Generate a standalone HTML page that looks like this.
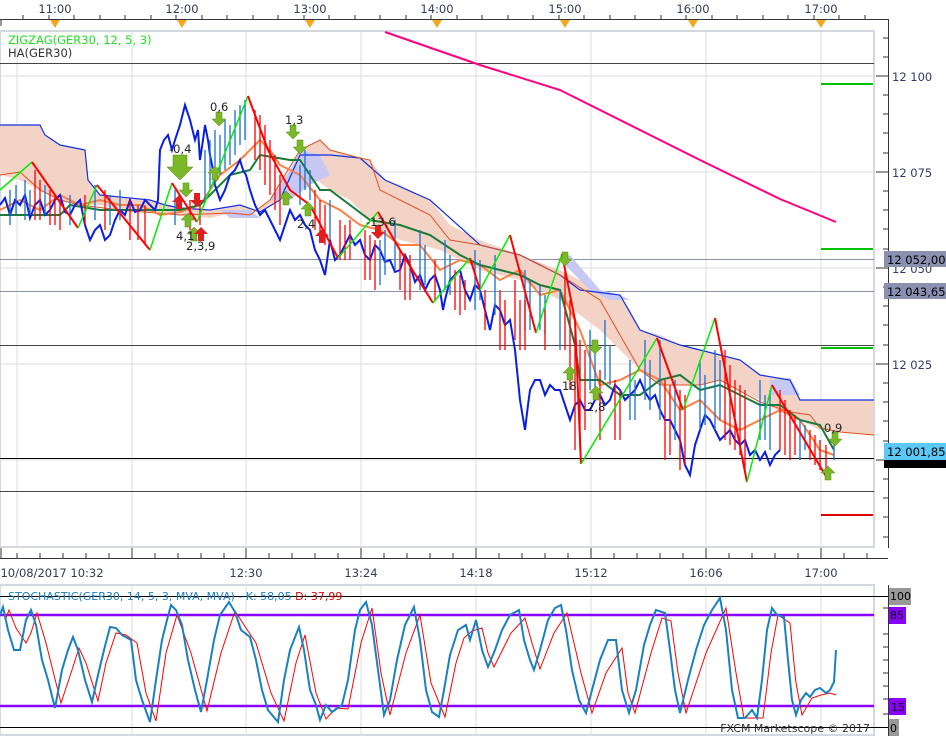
<!DOCTYPE html>
<html><head><meta charset="utf-8"><style>
html,body{margin:0;padding:0;background:#fff;}
svg{display:block;font-family:"DejaVu Sans",Verdana,sans-serif;}
</style></head><body>
<svg width="946" height="736" viewBox="0 0 946 736" xmlns="http://www.w3.org/2000/svg">
<rect width="946" height="736" fill="#fff"/>
<g font-size="11.5" fill="#333a55" text-anchor="middle">
<text x="55" y="13">11:00</text><text x="182" y="13">12:00</text><text x="310" y="13">13:00</text>
<text x="437" y="13">14:00</text><text x="565" y="13">15:00</text><text x="693" y="13">16:00</text><text x="821" y="13">17:00</text>
</g>
<line x1="0" y1="19.5" x2="888" y2="19.5" stroke="#333" stroke-width="1"/>
<g stroke="#333" stroke-width="1">
<path d="M1 19v7M23 19v-4M49 19v-4M74 19v-4M100 19v-4M125 19v-4M151 19v-4M176 19v-4M202 19v-4M227 19v-4M253 19v-4M278 19v-4M304 19v-4M329 19v-4M355 19v-4M380 19v-4M406 19v-4M431 19v-4M457 19v-4M482 19v-4M508 19v-4M533 19v-4M559 19v-4M584 19v-4M610 19v-4M635 19v-4M661 19v-4M686 19v-4M712 19v-4M737 19v-4M763 19v-4M788 19v-4M814 19v-4M839 19v-4M865 19v-4"/>
</g>
<g fill="#f5a623">
<path d="M50 20h10l-5 8z"/><path d="M177 20h10l-5 8z"/><path d="M305 20h10l-5 8z"/><path d="M432 20h10l-5 8z"/><path d="M560 20h10l-5 8z"/><path d="M688 20h10l-5 8z"/><path d="M816 20h10l-5 8z"/>
</g>
<rect x="0" y="31" width="874" height="516" fill="none" stroke="#d4d8e0" stroke-width="2"/>
<line x1="888.5" y1="19" x2="888.5" y2="548" stroke="#333"/>
<g stroke="#ddd" stroke-width="1">
<path d="M17 32v515M132 32v515M246 32v515M361 32v515M476 32v515M591 32v515M706 32v515M821 32v515"/>
<path d="M0 76h874M0 172h874M0 268h874M0 364h874M0 460h874"/>
</g>
<g stroke="#333"><path d="M876 76h12M876 172h12M876 268h12M876 364h12M876 460h12M883 38h5M883 57h5M883 95h5M883 114h5M883 133h5M883 153h5M883 191h5M883 210h5M883 229h5M883 249h5M883 287h5M883 306h5M883 325h5M883 345h5M883 383h5M883 402h5M883 421h5M883 441h5M883 479h5M883 498h5M883 517h5M883 537h5"/></g>
<g font-size="11.5" fill="#333a66"><text x="892" y="81">12 100</text><text x="892" y="177">12 075</text><text x="892" y="273">12 050</text><text x="892" y="369">12 025</text></g>
<line x1="0" y1="63.5" x2="874" y2="63.5" stroke="#444"/>
<line x1="0" y1="259.5" x2="874" y2="259.5" stroke="#8a90b0"/>
<line x1="0" y1="291.5" x2="874" y2="291.5" stroke="#8a90b0"/>
<line x1="0" y1="345.5" x2="874" y2="345.5" stroke="#444"/>
<line x1="0" y1="458.5" x2="874" y2="458.5" stroke="#000"/>
<line x1="0" y1="491.5" x2="874" y2="491.5" stroke="#444"/>
<path d="M821 415h52" stroke="#9a80d8" stroke-width="2"/>
<g stroke="#00c000" stroke-width="2"><path d="M821 84h52M821 249h52M821 348h52"/></g>
<path d="M821 515h52" stroke="#e00000" stroke-width="2"/>
<path d="M0 125 L40 125 L45 135 L60 145 L85 150 L88 180 L100 195 L150 200 L165 205 L180 208 L210 210 L240 205 L260 212 L280 200 L300 150 L320 140 L330 150 L360 158 L370 160 L385 180 L400 185 L430 200 L450 225 L480 240 L520 255 L560 270 L580 280 L600 290 L620 295 L630 310 L640 330 L660 335 L680 345 L700 350 L720 355 L740 360 L760 375 L790 380 L800 400 L874 400 L874 435 L840 432 L820 430 L800 420 L780 412 L760 400 L720 380 L700 385 L660 385 L640 370 L600 330 L560 300 L520 280 L480 270 L440 250 L400 240 L380 230 L350 200 L330 190 L310 175 L290 175 L270 200 L250 215 L230 213 L210 218 L180 215 L150 212 L120 210 L100 205 L80 205 L60 200 L40 190 L20 180 L0 175Z" fill="#f3d3c6"/>
<path d="M270 200 L290 170 L300 150 L320 155 L330 175 L310 185 L290 200Z M560 260 L570 255 L600 290 L620 295 L630 300 L610 300 L590 290Z M770 380 L790 378 L800 395 L770 395Z M220 210 L250 210 L260 218 L230 218Z" fill="#c8c8f5"/>
<polyline fill="none" stroke="#1030e0" stroke-width="1.2" points="0,125 40,125 45,135 60,145 85,150 88,180 100,195 150,200 165,205 180,208 210,210 240,205 260,212 280,200 300,155 330,155 360,158 385,180 430,200 480,245 520,255 560,275 580,290 620,295 640,330 680,345 720,355 740,360 760,375 790,380 800,400 874,400"/>
<polyline fill="none" stroke="#e05020" stroke-width="1" points="0,175 20,172 40,190 60,200 80,205 120,210 180,215 230,213 250,215 270,200 300,150 320,140 330,150 360,158 370,160 380,190 400,200 430,215 450,240 480,245 520,255 560,275 600,300 640,370 660,385 700,385 720,380 760,402 790,412 810,415 820,428 840,432 874,435"/>
<polyline fill="none" stroke="#ff7f40" stroke-width="2" points="0,210 20,200 40,210 60,195 80,205 100,200 120,205 140,205 160,215 180,212 200,205 220,175 240,160 260,140 270,150 280,165 300,175 320,200 340,210 360,225 380,230 400,245 420,245 440,270 460,260 480,265 500,280 520,270 540,295 560,290 580,330 600,385 620,380 640,370 660,380 680,410 700,400 720,420 740,430 760,420 780,410 800,420 820,450 834,455"/>
<polyline fill="none" stroke="#1a7a3a" stroke-width="2" points="0,215 60,215 70,205 100,210 130,210 150,210 180,210 200,205 230,175 250,170 260,155 290,160 300,160 320,190 330,190 350,205 370,220 400,225 430,235 460,255 480,265 500,270 520,275 540,285 560,290 575,345 580,380 600,380 620,395 640,395 660,380 680,375 700,390 720,385 740,395 760,405 780,405 800,420 820,425 834,450"/>
<polyline fill="none" stroke="#0a1ee0" stroke-width="2" points="0,205 5,198 10,215 15,200 20,205 25,195 30,218 35,205 40,200 45,215 50,210 55,200 60,195 65,212 70,215 75,205 80,200 85,225 90,240 95,230 100,225 105,240 110,235 115,220 120,210 125,215 130,200 135,212 140,210 145,200 150,205 155,210 158,200 160,150 164,140 168,135 172,150 175,140 180,125 185,105 190,120 195,140 198,130 200,160 203,140 205,125 208,140 210,155 213,170 215,185 220,200 225,190 230,175 235,170 240,160 243,170 246,175 250,190 255,205 260,215 265,210 270,220 275,230 280,240 285,225 290,210 295,220 300,215 305,225 310,230 315,250 320,260 325,275 330,240 335,260 340,255 345,245 350,235 355,245 360,240 365,255 370,260 375,245 380,250 385,262 390,260 395,272 400,270 405,255 410,265 415,282 420,275 425,290 430,280 435,275 440,290 443,310 445,300 450,280 455,275 460,270 465,290 470,300 475,285 480,290 485,310 490,330 495,305 500,310 505,325 510,320 515,350 520,400 525,430 528,405 530,390 535,380 540,380 545,395 550,385 555,390 560,390 565,405 570,420 575,405 580,400 585,410 590,410 595,400 600,395 605,405 610,400 615,385 620,390 625,400 630,395 635,390 640,380 645,392 650,400 655,395 660,410 665,420 670,420 675,430 680,440 685,465 690,475 695,445 700,430 705,415 710,420 715,430 720,440 725,435 730,430 735,440 740,445 745,440 750,455 755,450 760,460 765,452 770,465 775,455 780,450"/>
<g stroke="#1a6fd0" stroke-width="1.3">
<path d="M10 190v35M16 185v30M25 180v40M30 190v25M45 185v30M70 195v30M95 185v35M110 195v30M120 190v30M175 190v35M205 150v50M210 140v50M215 130v55M220 135v40M225 120v50M230 125v40M235 110v45M240 105v40M245 100v40M300 165v40M305 150v40M310 170v30M330 200v40M380 240v45M385 230v45M395 220v50M420 230v60M425 245v40M445 240v50M450 255v40M475 250v60M480 260v40M495 255v60M525 270v60M530 280v50M540 285v45M545 295v40M560 290v60M590 330v60M595 340v50M605 320v60M610 345v40M630 360v60M635 380v40M645 340v60M650 360v50M660 340v80M675 380v60M700 360v70M705 375v50M715 350v80M720 360v60M760 380v60M765 395v45M770 390v60M800 420v40M805 425v25M834 430v30"/>
</g>
<g stroke="#ff0000" stroke-width="1.3">
<path d="M35 170v50M40 180v40M50 190v35M55 195v30M60 200v30M85 195v30M105 190v40M130 200v40M138 205v35M145 205v40M190 200v30M200 205v20M255 110v50M260 115v55M265 125v60M270 140v55M275 155v55M280 175v50M315 190v40M320 200v35M325 205v40M340 220v40M345 225v35M350 220v40M365 230v50M370 235v45M375 240v50M400 250v40M405 255v45M410 255v45M435 260v40M455 270v40M460 275v40M465 280v30M485 290v40M500 290v60M505 300v50M515 280v60M520 300v50M525 300v50M545 310v40M565 270v80M570 300v90M575 330v120M580 340v110M585 350v80M600 370v70M615 380v60M620 390v50M665 380v80M670 385v70M680 390v80M685 395v70M725 350v90M730 365v80M735 380v70M740 385v70M745 390v80M780 390v60M785 400v55M790 410v50M795 415v40M810 430v30M815 435v30M820 440v30M826 445v30"/>
</g>
<polyline fill="none" stroke="#00ee00" stroke-width="1.5" points="0,190 32,162"/>
<polyline fill="none" stroke="#ff0000" stroke-width="2" points="32,162 78,228"/>
<polyline fill="none" stroke="#00ee00" stroke-width="1.5" points="78,228 97,185"/>
<polyline fill="none" stroke="#ff0000" stroke-width="2" points="97,185 150,250"/>
<polyline fill="none" stroke="#00ee00" stroke-width="1.5" points="150,250 172,183"/>
<polyline fill="none" stroke="#ff0000" stroke-width="2" points="172,183 197,222"/>
<polyline fill="none" stroke="#00ee00" stroke-width="1.5" points="197,222 248,96"/>
<polyline fill="none" stroke="#ff0000" stroke-width="2" points="248,96 268,150 290,190 310,205 338,258"/>
<polyline fill="none" stroke="#00ee00" stroke-width="1.5" points="338,258 378,212"/>
<polyline fill="none" stroke="#ff0000" stroke-width="2" points="378,212 400,250 433,303"/>
<polyline fill="none" stroke="#00ee00" stroke-width="1.5" points="433,303 470,258"/>
<polyline fill="none" stroke="#ff0000" stroke-width="2" points="470,258 480,290"/>
<polyline fill="none" stroke="#00ee00" stroke-width="1.5" points="480,290 510,235"/>
<polyline fill="none" stroke="#ff0000" stroke-width="2" points="510,235 536,333"/>
<polyline fill="none" stroke="#00ee00" stroke-width="1.5" points="536,333 562,254"/>
<polyline fill="none" stroke="#ff0000" stroke-width="2" points="562,254 575,320 581,464"/>
<polyline fill="none" stroke="#00ee00" stroke-width="1.5" points="581,464 657,338"/>
<polyline fill="none" stroke="#ff0000" stroke-width="2" points="657,338 683,410"/>
<polyline fill="none" stroke="#00ee00" stroke-width="1.5" points="683,410 715,318"/>
<polyline fill="none" stroke="#ff0000" stroke-width="2" points="715,318 747,482"/>
<polyline fill="none" stroke="#00ee00" stroke-width="1.5" points="747,482 772,385"/>
<polyline fill="none" stroke="#ff0000" stroke-width="2" points="772,385 827,478"/>
<polyline fill="none" stroke="#ff0080" stroke-width="2" points="385,32 480,65 560,90 640,130 700,160 780,199 836,222"/>
<g fill="#7ab828" stroke="#4d8a10" stroke-width="0.5">
<path d="M173 155h14v12h6l-13 13l-13-13h6z"/>
<path d="M216 112h6v7h4l-7 7l-7-7h4z"/><path d="M290 125h6v7h4l-7 7l-7-7h4z"/><path d="M297 140h6v7h4l-7 7l-7-7h4z"/>
<path d="M183 183h6v7h4l-7 7l-7-7h4z"/><path d="M562 252h6v7h4l-7 7l-7-7h4z"/><path d="M592 340h6v7h4l-7 7l-7-7h4z"/><path d="M832 432h6v7h4l-7 7l-7-7h4z"/>
<path d="M185 227h6v-7h4l-7-7l-7 7h4z"/><path d="M191 241h6v-7h4l-7-7l-7 7h4z"/><path d="M212 180h6v-7h4l-7-7l-7 7h4z"/><path d="M283 205h6v-7h4l-7-7l-7 7h4z"/><path d="M305 216h6v-7h4l-7-7l-7 7h4z"/><path d="M567 380h6v-7h4l-7-7l-7 7h4z"/><path d="M593 400h6v-7h4l-7-7l-7 7h4z"/><path d="M825 480h6v-7h4l-7-7l-7 7h4z"/>
</g>
<g fill="#e02020">
<path d="M176 209h6v-7h4l-7-7l-7 7h4z"/><path d="M198 241h6v-7h4l-7-7l-7 7h4z"/><path d="M319 243h6v-7h4l-7-7l-7 7h4z"/>
<path d="M194 193h6v7h4l-7 7l-7-7h4z"/><path d="M375 225h6v7h4l-7 7l-7-7h4z"/>
</g>
<g font-size="11.5" fill="#222">
<text x="210" y="111">0,6</text><text x="285" y="124">1,3</text><text x="169" y="153">-0,4</text>
<text x="176" y="240">4,1</text><text x="186" y="250">2,3,9</text><text x="297" y="228">2,4</text><text x="366" y="226">-13,6</text>
<text x="562" y="390">18</text><text x="587" y="411">2,8</text><text x="824" y="432">0,9</text>
</g>
<text x="8" y="44" font-size="11.5" fill="#22dd22">ZIGZAG(GER30, 12, 5, 3)</text>
<text x="8" y="57" font-size="11.5" fill="#333">HA(GER30)</text>
<rect x="884" y="251" width="62" height="16" fill="#8a90b0"/><text x="887" y="264" font-size="11.5" fill="#000">12 052,00</text>
<rect x="884" y="283" width="62" height="16" fill="#8a90b0"/><text x="887" y="296" font-size="11.5" fill="#000">12 043,65</text>
<rect x="884" y="460" width="62" height="8" fill="#000"/>
<rect x="884" y="443" width="62" height="17" fill="#5bc8f5"/><text x="887" y="456" font-size="11.5" fill="#000">12 001,85</text>
<line x1="0" y1="558.5" x2="888" y2="558.5" stroke="#333"/>
<g stroke="#333"><path d="M1 548v10M132 548v10M246 548v10M361 548v10M476 548v10M591 548v10M706 548v10M821 548v10M17 553v5M40 553v5M63 553v5M86 553v5M109 553v5M155 553v5M178 553v5M201 553v5M224 553v5M269 553v5M292 553v5M315 553v5M338 553v5M384 553v5M407 553v5M430 553v5M453 553v5M499 553v5M522 553v5M545 553v5M568 553v5M614 553v5M637 553v5M660 553v5M683 553v5M729 553v5M752 553v5M775 553v5M798 553v5M844 553v5M867 553v5"/></g>
<g font-size="11.5" fill="#333a55" text-anchor="middle">
<text x="52" y="577">10/08/2017 10:32</text><text x="246" y="577">12:30</text><text x="361" y="577">13:24</text><text x="476" y="577">14:18</text><text x="591" y="577">15:12</text><text x="706" y="577">16:06</text><text x="821" y="577">17:00</text>
</g>
<rect x="0" y="585" width="874" height="150" fill="none" stroke="#d4d8e0" stroke-width="2"/>
<line x1="888.5" y1="585" x2="888.5" y2="736" stroke="#333"/>
<g stroke="#ddd"><path d="M132 586v150M246 586v150M361 586v150M476 586v150M591 586v150M706 586v150M821 586v150"/></g>
<line x1="0" y1="596.5" x2="888" y2="596.5" stroke="#000"/>
<line x1="0" y1="727.5" x2="888" y2="727.5" stroke="#000"/>
<line x1="0" y1="615" x2="874" y2="615" stroke="#8a00ff" stroke-width="2.5"/>
<line x1="0" y1="706" x2="874" y2="706" stroke="#8a00ff" stroke-width="2.5"/>
<g stroke="#333"><path d="M883 608h5M883 634h5M883 647h5M883 660h5M883 673h5M883 686h5M883 699h5M883 714h5"/></g>
<rect x="889" y="588" width="22" height="17" fill="#999"/><text x="890" y="600" font-size="11" fill="#000">100</text>
<rect x="889" y="607" width="17" height="17" fill="#8a00ff"/><text x="890" y="619" font-size="11" fill="#000">85</text>
<rect x="889" y="698" width="17" height="17" fill="#8a00ff"/><text x="891" y="711" font-size="11" fill="#000">15</text>
<rect x="889" y="719" width="10" height="17" fill="#999"/><text x="890" y="732" font-size="11" fill="#000">0</text>
<polyline fill="none" stroke="#ff0000" stroke-width="1" transform="translate(6,3)" points="0,615 3,607 10,625 20,640 25,630 31,610 40,640 55,700 65,670 73,645 80,660 92,698 100,660 110,630 120,632 131,640 140,690 150,718 160,650 171,612 185,650 201,708 215,650 229,608 240,625 250,640 265,690 278,718 290,660 299,632 310,690 320,716 330,705 342,706 355,640 366,605 375,670 384,712 400,650 414,612 425,680 439,714 450,660 458,635 466,628 476,625 482,650 488,664 505,630 519,615 526,640 534,666 548,630 561,610 575,670 586,710 600,670 616,645 622,690 629,710 645,650 656,615 665,618 672,670 680,710 700,650 720,605 730,670 738,715 757,715 765,650 772,612 784,620 790,680 796,712 806,695 815,692 824,690 830,692"/>
<polyline fill="none" stroke="#1a80c0" stroke-width="2" points="0,615 3,607 8,630 14,650 20,650 26,620 31,610 36,625 42,660 48,680 55,708 62,670 68,650 73,637 78,650 85,680 92,702 98,675 104,650 110,627 116,628 122,635 131,640 136,680 142,700 150,722 156,680 162,640 167,620 171,605 176,610 182,625 188,660 195,690 201,712 207,680 214,640 220,615 229,602 235,612 241,630 250,637 256,660 262,690 268,710 278,722 284,680 290,650 299,627 304,650 310,690 316,705 320,720 326,705 332,712 342,705 348,680 355,630 360,610 366,602 372,625 378,670 384,715 390,700 397,660 405,625 414,607 420,640 426,690 432,712 439,717 444,690 450,655 458,630 466,625 470,640 476,620 482,650 488,667 495,650 502,630 510,615 519,610 524,640 530,660 534,670 540,650 548,620 555,608 561,605 566,630 572,670 579,700 586,713 592,690 600,660 608,640 616,640 622,690 629,713 636,690 644,645 650,625 656,610 665,613 670,650 675,690 680,713 688,680 696,650 704,625 712,610 720,598 726,630 732,690 738,718 745,718 752,710 757,718 762,680 767,630 772,608 777,615 784,617 788,660 792,700 796,715 801,700 806,693 810,697 815,690 820,688 826,693 830,690 834,682 836,650"/>
<text x="8" y="600" font-size="11" fill="#1a80c0">STOCHASTIC(GER30, 14, 5, 3, MVA, MVA) - K: 58,05 <tspan fill="#e00000">D: 37,99</tspan></text>
<text x="870" y="732" font-size="11" fill="#333" text-anchor="end">FXCM Marketscope © 2017</text>
</svg>
</body></html>
